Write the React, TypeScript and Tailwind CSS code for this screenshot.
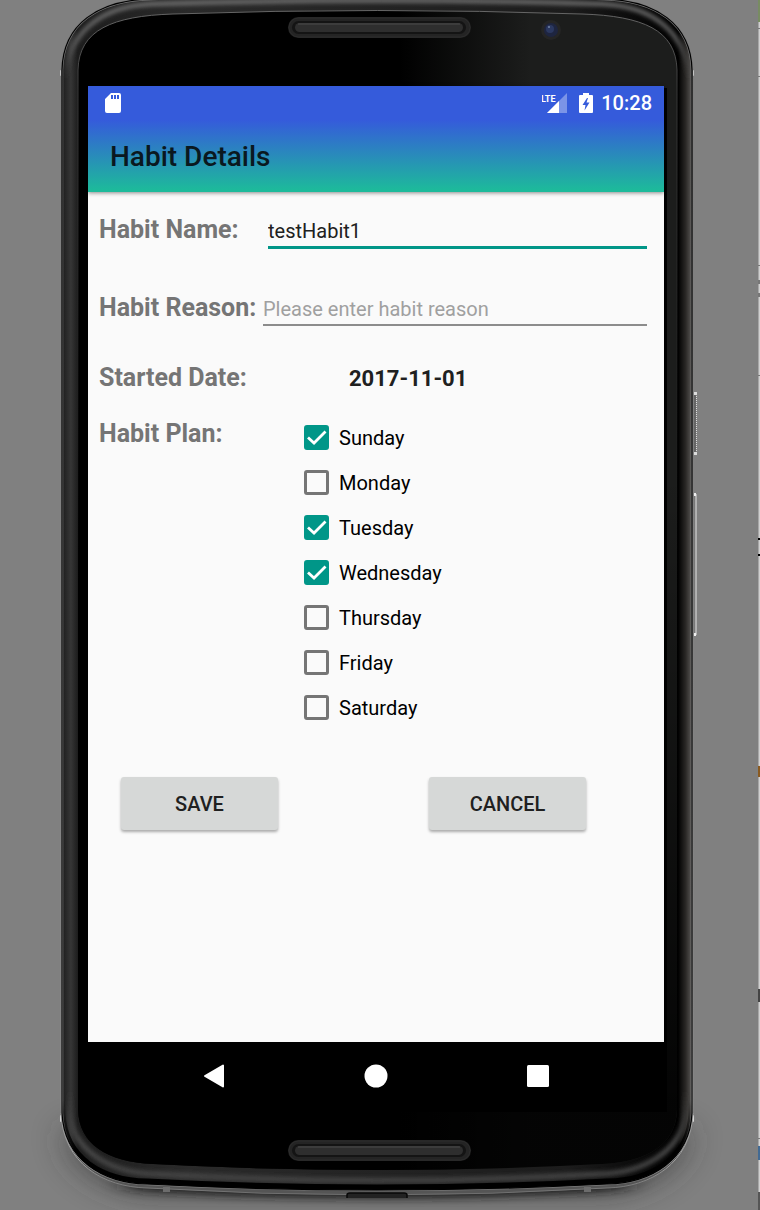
import { useState } from 'react';

const DAYS = ['Sunday', 'Monday', 'Tuesday', 'Wednesday', 'Thursday', 'Friday', 'Saturday'];

const BODY =
  'M62 70C63 24 98 0 152 -1Q377 -8 602 -1C656 0 691 24 692 70V1113C690 1160 651 1183 607 1184Q377 1196 147 1184C103 1183 64 1160 62 1113Z';
const GLASS =
  'M78 70C79 30 112 16 173 14Q377 7 582 14C643 16 676 30 677 70V1110C676 1144 648 1162 602 1164Q377 1176 153 1164C107 1162 79 1144 78 1110Z';

function Speaker({ y }: { y: number }) {
  return (
    <g>
      <rect x="288" y={y} width="183" height="21" rx="10.5" fill="#242424" />
      <rect x="289" y={y + 1} width="181" height="19" rx="9.5" fill="none" stroke="#2c2c2c" />
      <rect x="292" y={y + 4} width="174" height="13" rx="6.5" fill="#141414" />
      <rect x="295" y={y + 6} width="168" height="9" rx="4.5" fill="#2e2e2e" />
      <path d={`M298 ${y + 7}H460`} stroke="#4a4a4a" />
    </g>
  );
}

function PhoneFrame() {
  return (
    <svg
      aria-hidden="true"
      className="absolute inset-0 h-full w-full"
      viewBox="0 0 760 1210"
      preserveAspectRatio="none"
    >
      <defs>
        <clipPath id="body">
          <path d={BODY} />
        </clipPath>
        <linearGradient id="rim" gradientUnits="userSpaceOnUse" x1="62" y1="0" x2="692" y2="0">
          <stop offset="0" stopColor="#1c1c1c" />
          <stop offset="0.014" stopColor="#363636" />
          <stop offset="0.025" stopColor="#1d1d1d" />
          <stop offset="0.2" stopColor="#2a2a2a" />
          <stop offset="0.8" stopColor="#1c1c1c" />
          <stop offset="0.978" stopColor="#000000" />
          <stop offset="0.99" stopColor="#2a2826" />
          <stop offset="1" stopColor="#5a5856" />
        </linearGradient>
        <linearGradient id="glass" gradientUnits="userSpaceOnUse" x1="400" y1="0" x2="530" y2="0">
          <stop offset="0" stopColor="#000000" />
          <stop offset="1" stopColor="#1c1d1c" />
        </linearGradient>
        <linearGradient id="fade" x1="0" y1="0" x2="0" y2="1">
          <stop offset="0.4" stopColor="#000000" stopOpacity="0" />
          <stop offset="0.94" stopColor="#000000" stopOpacity="0.85" />
        </linearGradient>
        <linearGradient id="glassEdge" x1="0" y1="0" x2="0" y2="1">
          <stop offset="0" stopColor="#666666" />
          <stop offset="0.07" stopColor="#383838" />
          <stop offset="0.5" stopColor="#222222" stopOpacity="0" />
        </linearGradient>
        <linearGradient id="silver" gradientUnits="userSpaceOnUse" x1="0" y1="0" x2="0" y2="1210">
          <stop offset="0" stopColor="#777777" />
          <stop offset="0.9" stopColor="#999999" />
          <stop offset="0.96" stopColor="#a0a0a0" />
          <stop offset="1" stopColor="#555555" />
        </linearGradient>
        <linearGradient id="topGlow" gradientUnits="userSpaceOnUse" x1="0" y1="0" x2="0" y2="80">
          <stop offset="0" stopColor="#767676" />
          <stop offset="0.5" stopColor="#666666" />
          <stop offset="1" stopColor="#444444" stopOpacity="0" />
        </linearGradient>
        <linearGradient id="bottomGlow" gradientUnits="userSpaceOnUse" x1="0" y1="1090" x2="0" y2="1190">
          <stop offset="0" stopColor="#444444" stopOpacity="0" />
          <stop offset="0.5" stopColor="#4a4a4a" />
          <stop offset="1" stopColor="#444444" />
        </linearGradient>
        <linearGradient id="bottomLine" gradientUnits="userSpaceOnUse" x1="0" y1="1100" x2="0" y2="1150">
          <stop offset="0" stopColor="#000000" stopOpacity="0" />
          <stop offset="1" stopColor="#000000" />
        </linearGradient>
        <filter id="soft2" x="-10%" y="-10%" width="120%" height="120%">
          <feGaussianBlur stdDeviation="2" />
        </filter>
        <filter id="soft4" x="-10%" y="-100%" width="120%" height="300%">
          <feGaussianBlur stdDeviation="14 4" />
        </filter>
        <filter id="soft16" x="-20%" y="-80%" width="140%" height="260%">
          <feGaussianBlur stdDeviation="18 16" />
        </filter>
      </defs>
      <path d="M66 1130H688Q680 1180 610 1192H144Q74 1180 66 1130Z" fill="#303030" opacity="0.75" filter="url(#soft16)" />
      <path d="M130 1176Q377 1196 624 1176V1190Q377 1206 130 1190Z" fill="#1c1c1c" filter="url(#soft4)" />
      <g fill="#d5d5d5">
        <rect x="60" y="70" width="2" height="6" rx="1" />
        <rect x="692" y="70" width="2" height="6" rx="1" />
        <rect x="60" y="1115" width="2" height="7" rx="1" />
        <rect x="692" y="1115" width="2" height="7" rx="1" />
      </g>
      <path d="M61 1113C63 1163 103 1187 147 1188Q377 1202 607 1188C651 1187 691 1163 693 1113Z" fill="#555555" stroke="url(#silver)" />
      <path d={BODY} fill="url(#rim)" stroke="url(#silver)" strokeWidth="2.4" />
      <g clipPath="url(#body)">
        <path d="M66 80C67 30 104 6 152 4Q377 -3 602 4C650 6 687 30 688 80" fill="none" stroke="url(#topGlow)" strokeWidth="4" filter="url(#soft2)" />
        <path d="M70 1090V1113C73 1152 112 1173 155 1174Q377 1187 600 1174C642 1173 682 1152 685 1113V1090" fill="none" stroke="url(#bottomGlow)" strokeWidth="5" filter="url(#soft2)" />
        <path d="M62 1100V1113C64 1160 103 1181 147 1182Q377 1194 607 1182C651 1181 690 1160 692 1113V1100" fill="none" stroke="url(#bottomLine)" strokeWidth="7" />
      </g>
      <path d={BODY} fill="none" stroke="#000000" strokeWidth="1.2" />
      <path d={GLASS} fill="url(#glass)" />
      <path d={GLASS} fill="url(#fade)" />
      <path d={GLASS} fill="none" stroke="url(#glassEdge)" />
      <rect x="83" y="88" width="584" height="1024" fill="#000000" />
      <Speaker y={17} />
      <Speaker y={1140} />
      <circle cx="551" cy="30" r="10" fill="#252525" />
      <circle cx="551" cy="30" r="7" fill="#1e2540" />
      <circle cx="550" cy="29" r="4" fill="#2b3860" />
      <circle cx="549" cy="27" r="1" fill="#7584a5" />
      <path d="M347 1198V1195Q347 1193 350 1193H404Q407 1193 407 1195V1198" fill="#222222" stroke="#080808" strokeWidth="1.5" />
      <rect x="163" y="1187" width="7" height="5" fill="#6c6c6c" />
      <rect x="584" y="1187" width="7" height="5" fill="#6c6c6c" />
      <rect x="694" y="394" width="2" height="60" fill="#666666" />
      <path d="M696.5 394V454" stroke="#dddddd" strokeDasharray="1 1" />
      <rect x="694" y="392" width="3" height="3" fill="#dddddd" />
      <rect x="694" y="452" width="3" height="3" fill="#dddddd" />
      <rect x="694" y="494" width="2" height="140" fill="#777777" />
      <path d="M696 494V635" stroke="#e4e4e4" />
      <rect x="694" y="493" width="2" height="3" fill="#eeeeee" />
      <rect x="694" y="633" width="2" height="3" fill="#eeeeee" />
      <rect x="758" y="0" width="2" height="1192" fill="#a8a8a8" />
      <rect x="759" y="0" width="1" height="1192" fill="#d0d0d0" />
      <rect x="758" y="0" width="2" height="22" fill="#788c62" />
      <path d="M758 28.5H760M758 76.5H760M758 265.5H760M758 375.5H760M758 1138.5H760" stroke="#777777" />
      <path d="M758 282H760M758 295H760" stroke="#777777" strokeWidth="4" />
      <path d="M758 539H760M758 555H760" stroke="#000000" strokeWidth="2" />
      <rect x="758" y="766" width="2" height="11" fill="#8a5a20" />
      <rect x="758" y="989" width="2" height="13" fill="#444444" />
      <rect x="758" y="1146" width="2" height="14" fill="#426a93" />
      <rect x="758" y="1192" width="2" height="18" fill="#555555" />
    </svg>
  );
}

function StatusBar() {
  return (
    <div className="flex h-[34px] items-center justify-between pl-[17px] pr-3 text-white">
      <svg aria-label="SD card" className="h-5 w-4" viewBox="0 0 16 20">
        <path
          fillRule="evenodd"
          fill="currentColor"
          d="M6 0H14Q16 0 16 2V18Q16 20 14 20H2Q0 20 0 18V6ZM6 2V6H8V2ZM9 2V6H11V2ZM12 2V6H14V2Z"
        />
      </svg>
      <div className="flex items-center">
        <svg aria-label="LTE signal" className="mr-3 h-5 w-[25px]" viewBox="0 0 25 20">
          <path d="M25 0V20H5Z" fill="#fff" fillOpacity="0.35" />
          <path d="M17 8V20H5Z" fill="#fff" />
          <rect width="14" height="10" fill="#355bdb" />
          <text x="-1" y="9" fill="#fff" className="font-['Roboto',sans-serif] text-[9px] font-bold">
            LTE
          </text>
        </svg>
        <svg aria-label="Battery charging" className="mr-2 h-5 w-[14px]" viewBox="0 0 14 20">
          <path
            fillRule="evenodd"
            fill="currentColor"
            d="M4 0H10V2H13Q14 2 14 3V19Q14 20 13 20H1Q0 20 0 19V3Q0 2 1 2H4ZM8 5L3.5 12H6.5L5.5 17.5L10.5 9.5H7.5L9 5Z"
          />
        </svg>
        <span className="text-[20px] font-medium leading-6">10:28</span>
      </div>
    </div>
  );
}

function DayCheckbox({ day, checked, onChange }: { day: string; checked: boolean; onChange: () => void }) {
  return (
    <label className="flex h-[45px] items-center gap-[10px] text-[20px] text-black">
      <span className="grid">
        <input
          type="checkbox"
          checked={checked}
          onChange={onChange}
          className="peer col-start-1 row-start-1 h-[25px] w-[25px] appearance-none rounded-[3px] border-[3px] border-[#757575] checked:border-[#009688] checked:bg-[#009688]"
        />
        <svg
          aria-hidden="true"
          viewBox="0 0 25 25"
          className="pointer-events-none invisible col-start-1 row-start-1 h-[25px] w-[25px] peer-checked:visible"
        >
          <path d="M4 12.5L10 18L21.5 6.5" fill="none" stroke="#fff" strokeWidth="2.8" />
        </svg>
      </span>
      {day}
    </label>
  );
}

export default function App() {
  const [name, setName] = useState('testHabit1');
  const [reason, setReason] = useState('');
  const [plan, setPlan] = useState(['Sunday', 'Tuesday', 'Wednesday']);

  const toggle = (day: string) =>
    setPlan((days) => (days.includes(day) ? days.filter((d) => d !== day) : [...days, day]));

  const labelStyle = 'shrink-0 text-[25px] font-bold leading-[30px] text-[#757575]';
  const buttonStyle =
    'h-[53px] w-[157px] rounded-[3px] bg-[#d6d8d7] text-[20px] font-medium text-[#202020] shadow-[0_2px_3px_rgba(0,0,0,0.32)]';
  const navStyle = 'flex h-[68px] w-[162px] items-center justify-center text-white';

  return (
    <div className="relative flex min-h-screen flex-col overflow-hidden bg-[#808080] pb-[100px] pl-[88px] pr-24 pt-[86px] font-['Roboto',sans-serif]">
      <PhoneFrame />
      <div className="relative flex grow flex-col bg-[#fafafa]">
        <header className="z-10 bg-[linear-gradient(to_bottom,#355bdb_34px,#1dba9b_104px)] shadow-[0_1px_4px_rgba(0,0,0,0.45)]">
          <StatusBar />
          <h1 className="flex h-[72px] items-center pl-[22px] pt-[2px] text-[28px] font-medium text-[#0a1820]">
            Habit Details
          </h1>
        </header>
        <form className="flex flex-col pl-[11px] pr-[17px] pt-[23px]" onSubmit={(e) => e.preventDefault()}>
          <div className="flex items-baseline">
            <label htmlFor="name" className={`w-[169px] ${labelStyle}`}>
              Habit Name:
            </label>
            <input
              id="name"
              value={name}
              onChange={(e) => setName(e.target.value)}
              className="min-w-0 grow border-b-[3px] border-[#009688] pb-[3px] text-[20px] leading-6 text-[#202020] outline-none"
            />
          </div>
          <div className="mt-[44px] flex items-baseline">
            <label htmlFor="reason" className={`w-[164px] ${labelStyle}`}>
              Habit Reason:
            </label>
            <input
              id="reason"
              value={reason}
              onChange={(e) => setReason(e.target.value)}
              placeholder="Please enter habit reason"
              className="min-w-0 grow border-b-2 border-[#8c8c8c] pb-[3px] text-[20px] leading-6 text-[#202020] outline-none placeholder:text-[#a0a0a0]"
            />
          </div>
          <div className="mt-[37px] flex items-baseline">
            <span className={`w-[250px] ${labelStyle}`}>Started Date:</span>
            <time dateTime="2017-11-01" className="text-[22px] font-bold leading-[30px] text-[#202020]">
              2017-11-01
            </time>
          </div>
          <fieldset className="mt-[21px] flex" aria-labelledby="plan">
            <span id="plan" className={`w-[205px] pt-1 ${labelStyle}`}>
              Habit Plan:
            </span>
            <div>
              {DAYS.map((day) => (
                <DayCheckbox key={day} day={day} checked={plan.includes(day)} onChange={() => toggle(day)} />
              ))}
            </div>
          </fieldset>
          <div className="mb-6 mt-[47px] flex justify-between pl-[22px] pr-[61px]">
            <button type="submit" className={buttonStyle}>
              SAVE
            </button>
            <button type="button" className={buttonStyle}>
              CANCEL
            </button>
          </div>
        </form>
      </div>
      <nav className="relative flex justify-center bg-black">
        <button aria-label="Back" className={navStyle}>
          <svg className="h-6 w-6" viewBox="0 0 24 24">
            <path d="M3 12L21 1.5V22.5Z" fill="currentColor" stroke="currentColor" strokeWidth="2" strokeLinejoin="round" />
          </svg>
        </button>
        <button aria-label="Home" className={navStyle}>
          <svg className="h-6 w-6" viewBox="0 0 24 24">
            <circle cx="12" cy="12" r="11.5" fill="currentColor" />
          </svg>
        </button>
        <button aria-label="Overview" className={navStyle}>
          <svg className="h-6 w-6" viewBox="0 0 24 24">
            <rect x="1" y="1" width="22" height="22" rx="1.5" fill="currentColor" />
          </svg>
        </button>
      </nav>
    </div>
  );
}
